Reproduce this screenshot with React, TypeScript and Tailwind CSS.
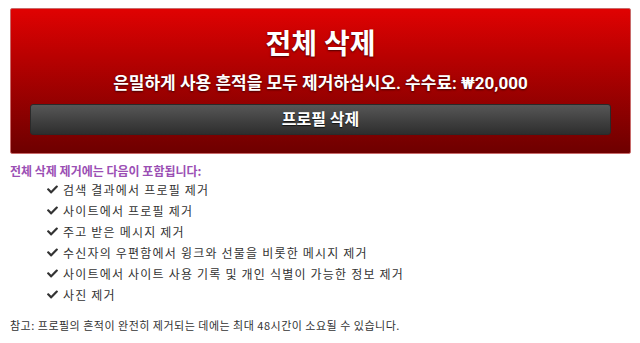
import { FaCheck } from "react-icons/fa";

const items = [
  "검색 결과에서 프로필 제거",
  "사이트에서 프로필 제거",
  "주고 받은 메시지 제거",
  "수신자의 우편함에서 윙크와 선물을 비롯한 메시지 제거",
  "사이트에서 사이트 사용 기록 및 개인 식별이 가능한 정보 제거",
  "사진 제거",
];

export default function App() {
  return (
    <div className="min-h-screen bg-white pt-2 font-['Roboto','Noto_Sans_CJK_KR',sans-serif]">
      <div className="mx-[10px] mr-[9px] rounded-[2px] border border-[#c86a6a] bg-gradient-to-b from-[#e00202] to-[#6e0000] px-[19px] pt-[18px] pb-[18px] text-center text-white">
        <h1 className="text-[28px] font-bold leading-[36px] [text-shadow:0_1px_2px_rgba(0,0,0,0.6)]">
          전체 삭제
        </h1>
        <p className="mt-[9px] text-[17px] font-bold leading-[22px] [text-shadow:0_1px_2px_rgba(0,0,0,0.6)]">
          은밀하게 사용 흔적을 모두 제거하십시오. 수수료: ₩20,000
        </p>
        <button className="mt-[10px] flex h-[31px] w-full items-center justify-center rounded-[3px] border border-[#2a2a2a] bg-gradient-to-b from-[#575757] to-[#2e2e2e] text-[16px] font-bold text-white [text-shadow:0_1px_1px_rgba(0,0,0,0.7)]">
          프로필 삭제
        </button>
      </div>

      <div className="px-[10px] pt-[9px] font-['Noto_Sans_CJK_KR',sans-serif]">
        <h2 className="text-[12px] font-bold leading-[16px] text-[#9b4fb4]">
          전체 삭제 제거에는 다음이 포함됩니다:
        </h2>
        <ul className="pl-[37px]">
          {items.map((t) => (
            <li
              key={t}
              className="flex h-[21px] items-center gap-[5px] text-[12px] tracking-[1.2px] text-[#333]"
            >
              <FaCheck className="h-[11px] w-[11px] shrink-0 text-[#333]" />
              <span>{t}</span>
            </li>
          ))}
        </ul>
        <p className="mt-[12px] text-[11px] tracking-[0.5px] leading-[16px] text-[#333]">
          참고: 프로필의 흔적이 완전히 제거되는 데에는 최대 48시간이 소요될 수 있습니다.
        </p>
      </div>
    </div>
  );
}
